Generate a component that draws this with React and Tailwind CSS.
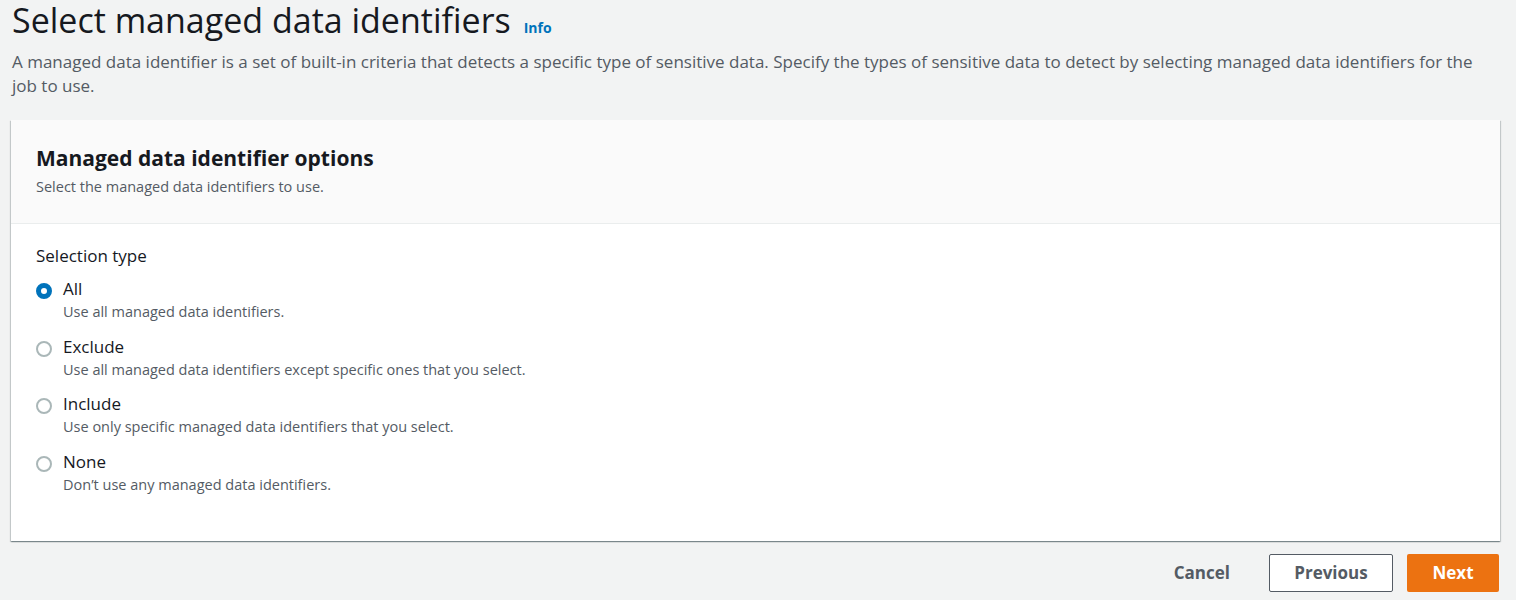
import React, { useState } from "react";

const options = [
  { id: "all", label: "All", desc: "Use all managed data identifiers." },
  {
    id: "exclude",
    label: "Exclude",
    desc: "Use all managed data identifiers except specific ones that you select.",
  },
  {
    id: "include",
    label: "Include",
    desc: "Use only specific managed data identifiers that you select.",
  },
  { id: "none", label: "None", desc: "Don\u2019t use any managed data identifiers." },
];

const Radio = ({ checked }) =>
  checked ? (
    <span className="mt-[6px] w-4 h-4 rounded-full border-[5px] border-[#0073bb] bg-white shrink-0" />
  ) : (
    <span className="mt-[6px] w-4 h-4 rounded-full border-2 border-[#aab7b8] bg-white shrink-0" />
  );

const App = () => {
  const [selected, setSelected] = useState("all");

  return (
    <div className="min-h-screen bg-[#f2f3f3] font-['Open_Sans',sans-serif] text-[#16191f] pl-[11px] pr-4 pb-2">
      <div className="flex items-baseline gap-[13px] pl-px">
        <h1 className="text-[34px] leading-[40px] font-normal">
          Select managed data identifiers
        </h1>
        <a className="text-sm font-bold text-[#0073bb]">Info</a>
      </div>
      <p className="pl-px mt-[10px] text-[17px] leading-[24px] text-[#545b64]">
        A managed data identifier is a set of built-in criteria that detects a
        specific type of sensitive data. Specify the types of sensitive data to
        detect by selecting managed data identifiers for the job to use.
      </p>

      <div className="mt-[22px] bg-white shadow-[0_1px_1px_0_rgba(0,28,36,0.3),1px_1px_1px_0_rgba(0,28,36,0.15),-1px_1px_1px_0_rgba(0,28,36,0.15)]">
        <div className="bg-[#fafafa] border-b border-[#eaeded] px-[25px] pt-[24px] pb-[26px]">
          <h2 className="text-[21px] leading-[28px] font-bold">
            Managed data identifier options
          </h2>
          <div className="text-[14.5px] leading-[20px] text-[#545b64] mt-[5px]">
            Select the managed data identifiers to use.
          </div>
        </div>

        <div className="px-[25px] pt-[20px] pb-[45px]">
          <div className="text-[17px] leading-[24px]">Selection type</div>
          <div className="mt-[9px] flex flex-col gap-[11.5px]">
            {options.map((o) => (
              <label
                key={o.id}
                className="flex gap-[11px] cursor-pointer"
                onClick={() => setSelected(o.id)}
              >
                <Radio checked={selected === o.id} />
                <div>
                  <div className="text-[17px] leading-[24px]">{o.label}</div>
                  <div className="text-[14.5px] leading-[22px] text-[#545b64]">
                    {o.desc}
                  </div>
                </div>
              </label>
            ))}
          </div>
        </div>
      </div>

      <div className="mt-[13px] flex justify-end items-center gap-[14px] pr-px">
        <button className="pl-5 pr-[25px] h-[38px] text-[17px] font-bold text-[#545b64]">
          Cancel
        </button>
        <button className="w-[124px] h-[38px] rounded-[2px] border border-[#545b64] bg-white text-[17px] font-bold text-[#545b64]">
          Previous
        </button>
        <button className="w-[92px] h-[38px] rounded-[2px] bg-[#ec7211] text-[17px] font-bold text-white">
          Next
        </button>
      </div>
    </div>
  );
};

export default App;
